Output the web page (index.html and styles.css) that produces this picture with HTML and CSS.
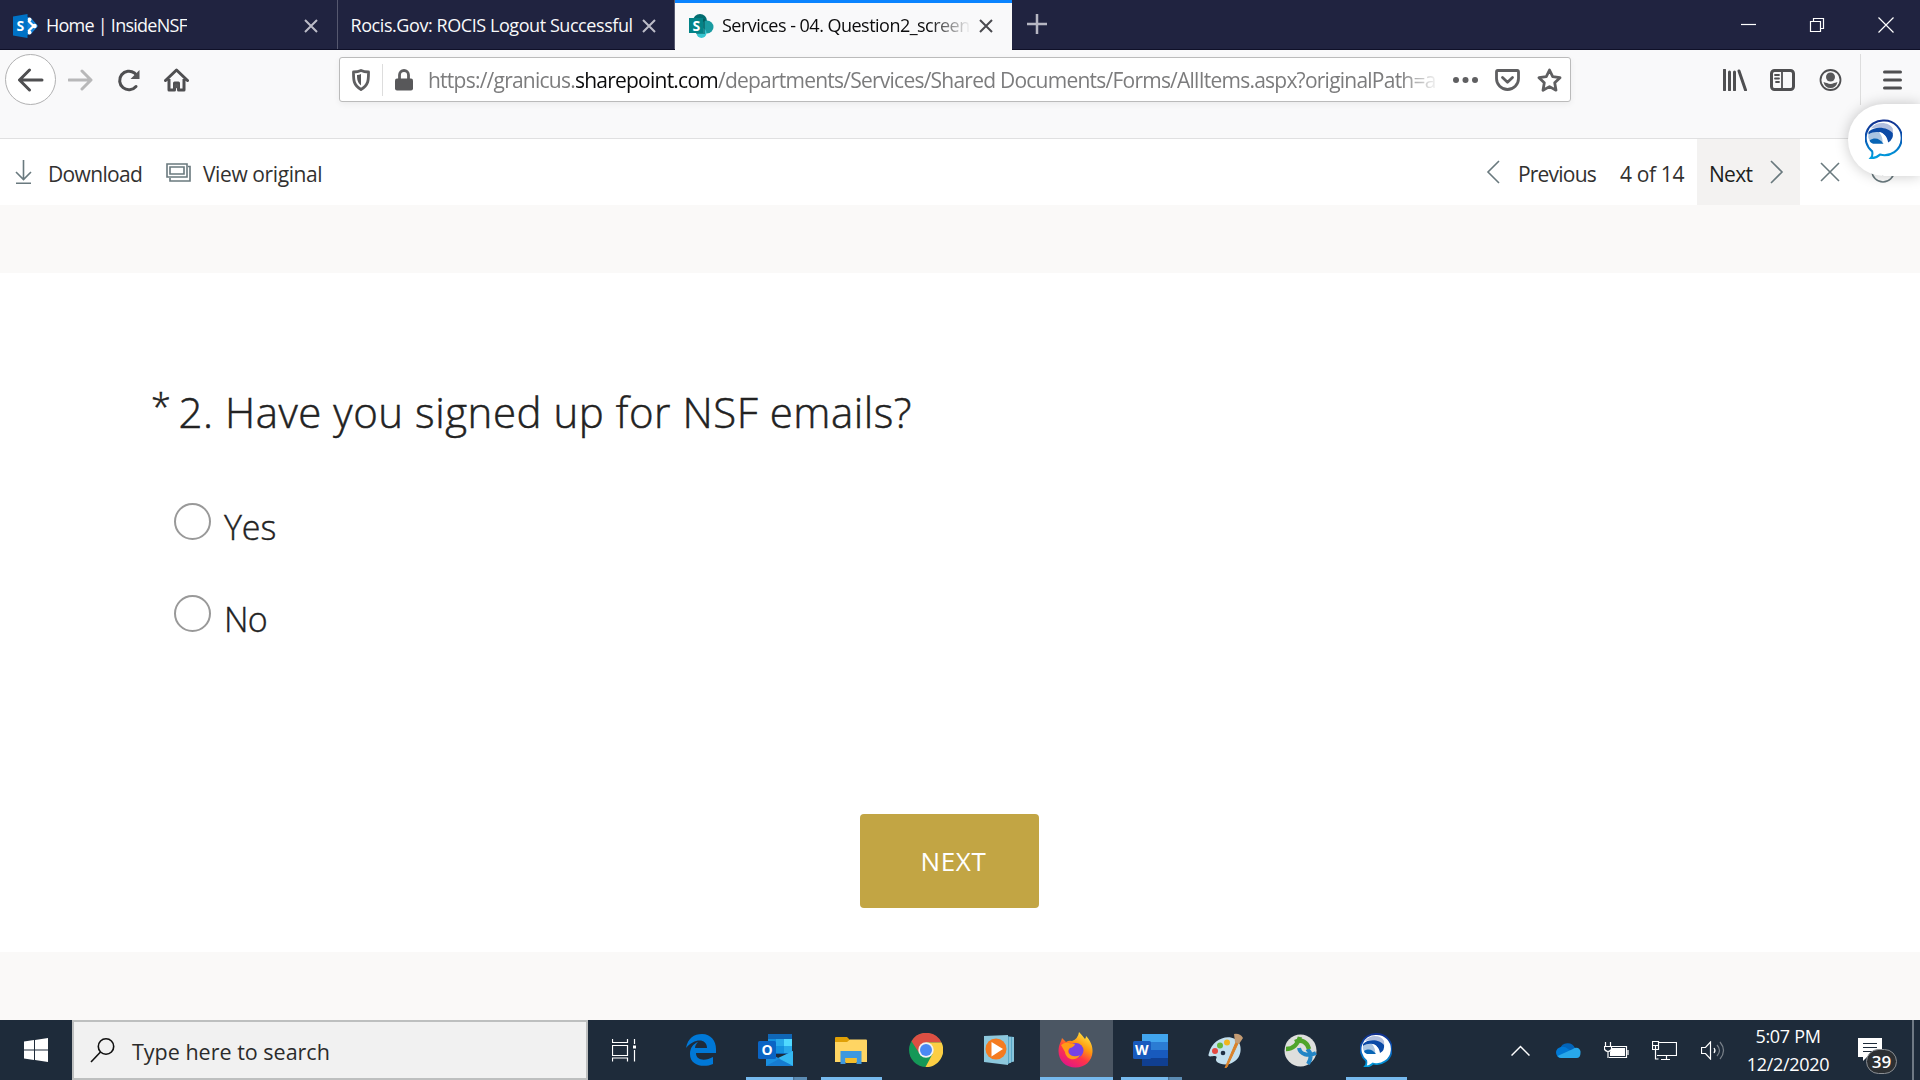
FILE: index.html
```html
<!DOCTYPE html>
<html lang="en">
<head>
  <meta charset="UTF-8">
  <meta name="viewport" content="width=device-width, initial-scale=1.0">
  <title>Services - 04. Question2_screen</title>
  <link rel="stylesheet" href="styles.css">
</head>
<body>
  <div class="tabs">
    <div class="tab">
      <svg class="favicon" width="25" height="24" viewBox="0 0 25 24">
        <path d="M14 3l4 1 7 8-7 8-4 1z" fill="#1080d8"/>
        <path d="M15 6.500l5.500 5.500-5.500 5.500" fill="none" stroke="#fff" stroke-width="2.200"/>
        <circle cx="16.500" cy="5.500" r="2" fill="#fff"/><circle cx="16.500" cy="18.500" r="2" fill="#fff"/><circle cx="21.500" cy="12" r="2.300" fill="#fff"/>
        <path d="M0 2.500L14.500 0v24L0 21.500z" fill="#0072c6"/>
        <text x="3.500" y="17" class="logo-letter">S</text>
      </svg>
      <span class="tab-title home-title">Home | InsideNSF</span>
      <svg class="tab-close" width="14" height="14" viewBox="0 0 14 14"><path d="M1 1l12 12M13 1L1 13"/></svg>
    </div>
    <div class="tab">
      <span class="tab-title rocis-title">Rocis.Gov: ROCIS Logout Successful</span>
      <svg class="tab-close" width="14" height="14" viewBox="0 0 14 14"><path d="M1 1l12 12M13 1L1 13"/></svg>
    </div>
    <div class="tab active">
      <svg class="favicon" width="25" height="24" viewBox="0 0 25 24">
        <circle cx="11" cy="7" r="7" fill="#036c70"/>
        <circle cx="18" cy="13" r="6.500" fill="#1a9ba1"/>
        <circle cx="12.500" cy="19" r="5" fill="#37c6d0"/>
        <path d="M7 5h9v15H7z" fill="#024f52" opacity=".5"/>
        <path d="M0 4h14v15H0z" fill="#038387"/>
        <text x="3.500" y="16.500" class="logo-letter">S</text>
      </svg>
      <span class="tab-title services-title">Services - 04. Question2_screen</span>
      <svg class="tab-close" width="14" height="14" viewBox="0 0 14 14"><path d="M1 1l12 12M13 1L1 13"/></svg>
    </div>
    <svg class="new-tab" width="22" height="22" viewBox="0 0 22 22"><path d="M11 1v20M1 11h20"/></svg>
    <div class="window-buttons">
      <svg width="16" height="16" viewBox="0 0 16 16"><path d="M1 7.500h15"/></svg>
      <svg width="16" height="16" viewBox="0 0 16 16"><path d="M1.500 4.500h10v10h-10zM4.500 4.500v-3h10v10h-3"/></svg>
      <svg width="16" height="16" viewBox="0 0 16 16"><path d="M.5 .5l15 15M15.500 .5l-15 15"/></svg>
    </div>
  </div>

  <div class="toolbar">
    <div class="nav">
      <div class="back">
        <svg width="26" height="24" viewBox="0 0 26 24"><path d="M24 12H2M11.500 2L1.500 12l10 10"/></svg>
      </div>
      <svg class="forward" width="25" height="24" viewBox="0 0 25 24"><path d="M1 12h21.500M14 3l9 9-9 9"/></svg>
      <svg class="reload" width="25" height="24" viewBox="0 0 25 24">
        <path d="M20 18.500A9.300 9.300 0 1 1 18.500 5l2.500 2.500"/>
        <path d="M23.500 2v9h-9z" class="solid"/>
      </svg>
      <svg class="home" width="25" height="24" viewBox="0 0 25 24">
        <path d="M1.500 12.500L12.500 2l11 10.500M5 11v11h5.500v-7h4v7H20V11"/>
        <circle cx="12.500" cy="18" r="2.200" class="solid"/>
      </svg>
    </div>
    <div class="url-bar">
      <svg class="shield" width="18" height="22" viewBox="0 0 18 22">
        <path d="M9 1.500c2.500 1.200 4.500 1.500 7.500 1.500 0 8 .2 13-7.500 17.500C1.300 16 1.500 11 1.500 3c3 0 5-.3 7.500-1.500z"/>
        <path d="M9 5v11.500C5.500 13.500 5 10.500 5 6c1.500 0 2.800-.4 4-1z" class="solid"/>
      </svg>
      <div class="url-divider"></div>
      <svg class="lock" width="18" height="22" viewBox="0 0 18 22">
        <path d="M4.500 10V6a4.500 4.500 0 0 1 9 0v4"/>
        <rect x="0" y="9.500" width="18" height="12" rx="2" class="solid"/>
      </svg>
      <span class="url">https://granicus.<b>sharepoint.com</b>/departments/Services/Shared Documents/Forms/AllItems.aspx?originalPath=a</span>
      <svg class="dots" width="25" height="6" viewBox="0 0 25 6"><circle cx="3" cy="3" r="3"/><circle cx="12.500" cy="3" r="3"/><circle cx="22" cy="3" r="3"/></svg>
      <svg class="pocket" width="25" height="22" viewBox="0 0 25 22"><path d="M2.800 1.500h19.400q1.300 0 1.300 1.500v6.500a11 11 0 0 1-22 0V3q0-1.500 1.300-1.500zM7.500 8.500l5 4.700 5-4.700"/></svg>
      <svg class="star" width="25" height="24" viewBox="0 0 25 24"><path d="M12.500 2l3.200 6.700 7.300 1-5.300 5.100 1.300 7.400-6.500-3.600L6 22.200l1.300-7.400L2 9.700l7.300-1z"/></svg>
    </div>
    <div class="tools">
      <svg class="library" width="25" height="22" viewBox="0 0 25 22"><path d="M1.500 1v20M6.500 3v18M11.500 3v18M16 2l6.500 19"/></svg>
      <svg width="25" height="22" viewBox="0 0 25 22"><rect x="1.500" y="1.500" width="22" height="19" rx="3"/><path d="M12 2v18M5 6h4M5 9.500h4M6 13h3" class="thin"/></svg>
      <svg width="23" height="22" viewBox="0 0 23 22"><circle cx="11.500" cy="11" r="10" class="thin"/><circle cx="11.500" cy="8" r="4.500" class="solid"/><path d="M4.500 13q2.500 1 3.500 1 3.500 2 7 0 1 0 3.500-1-1.500 6-7 6t-7-6z" class="solid"/></svg>
      <div class="menu-button">
        <svg width="19" height="20" viewBox="0 0 19 20"><path d="M1.500 2h16M1.500 10h16M1.500 18h16"/></svg>
      </div>
    </div>
  </div>

  <div class="doc-bar">
    <div class="doc-left">
      <svg class="download-icon" width="17" height="24" viewBox="0 0 17 24"><path d="M8.500 0v19M1 12l7.500 7.500L16 12M1 23.300h15"/></svg>
      <span class="download">Download</span>
      <svg class="original-icon" width="25" height="19" viewBox="0 0 25 19"><path d="M1 1h20v13H1zM4 4h14v7H4zM22 3.500h2V18H4v-3"/></svg>
      <span class="original">View original</span>
    </div>
    <div class="doc-right">
      <svg class="chevron" width="14" height="24" viewBox="0 0 14 24"><path d="M13 1L2 12l11 11"/></svg>
      <span class="previous">Previous</span>
      <span class="count">4 of 14</span>
      <div class="doc-next">
        <span class="next-label">Next</span>
        <svg class="chevron" width="14" height="24" viewBox="0 0 14 24"><path d="M1 1l11 11L1 23"/></svg>
      </div>
      <svg class="doc-close" width="20" height="20" viewBox="0 0 20 20"><path d="M1 1l18 18M19 1L1 19"/></svg>
      <svg class="doc-info" width="24" height="24" viewBox="0 0 24 24"><circle cx="12" cy="11" r="11"/><path d="M12 10v6"/></svg>
    </div>
  </div>

  <div class="viewer">
    <div class="page">
      <h1 class="question"><span class="required">*</span>2. Have you signed up for NSF emails?</h1>
      <div class="answers">
        <label class="answer"><i class="radio"></i><span class="yes">Yes</span></label>
        <label class="answer"><i class="radio"></i><span class="no">No</span></label>
      </div>
      <button class="next-btn">NEXT</button>
    </div>
  </div>

  <!-- Jabber tab floating at the window edge -->
  <div class="floating">
    <svg width="37" height="40" viewBox="0 0 32 34">
      <defs>
        <linearGradient id="wave" x1="0" y1="0" x2="0" y2="1"><stop offset="0" stop-color="#12308f"/><stop offset=".5" stop-color="#0758b4"/><stop offset="1" stop-color="#00a0e0"/></linearGradient>
      </defs>
      <path d="M16 1a15 15 0 1 1-3 29.500Q9 34 5 33.500q2-2 1.200-5.800A15 15 0 0 1 16 1z" fill="#fff" stroke="url(#wave)" stroke-width="1.800"/>
      <path d="M5 8C10 1 21 2 24 8q1 4-1 8C20 8 12 6 5 8z" fill="#b2bfdf"/>
      <path d="M3 11C9 5 20 7 24 12q1 5-4 8c-1-7-6-10-17-7z" fill="#0b4aa6"/>
      <path d="M3 13c6-4 14-2 15 3l1 4H6q-4-3-3-7z" fill="#a9c5e2"/>
      <path d="M12 11c4 0 8 5 7 10l-4 .5q1-6-3-10.500z" fill="#fff"/>
      <path d="M4 18c5-3 9-1 12 3H7q-3-1-3-3z" fill="#0865b5"/>
    </svg>
  </div>

  <div class="taskbar">
    <div class="start">
      <svg width="24" height="24" viewBox="0 0 24 24"><path d="M0 3.500L10 2v9.500H0zM11 1.900L24 0v11.500H11zM0 12.500h10V22L0 20.500zM11 12.500h13V24l-13-1.900z" fill="#fff"/></svg>
    </div>
    <div class="search">
      <svg width="25" height="25" viewBox="0 0 25 25"><circle cx="16" cy="8.500" r="7.700"/><path d="M10.500 14L1 24"/></svg>
      <span class="search-text">Type here to search</span>
    </div>
    <div class="apps">
      <div class="app task-view">
        <svg width="25" height="24" viewBox="0 0 25 24" class="line"><path d="M.5 1v3.500h15V1M.5 7.500h15v10H.5zM.5 23.500V20h15v3.500M22.500 1v5M22.500 12v11.500"/><path d="M21 7.500h3v3h-3z" fill="#fff" stroke="none"/></svg>
      </div>
      <div class="app">
        <svg width="30" height="32" viewBox="0 0 30 32"><path d="M0 14C2 4 8 0 16 0c9 0 14 7 14 15v4H10c0 8 10 8 17 4v7c-9 4-23 2-23-10 0-6 3-10 8-12-2 2-3 4-3 6h12C21 4 8 4 0 14z" fill="#0078d7"/></svg>
      </div>
      <div class="app open">
        <svg width="36" height="32" viewBox="0 0 36 32">
          <path d="M10 0h24v20H10z" fill="#1066b5"/><path d="M10 5h8v7h-8zM18 12h8v7h-8z" fill="#1490df"/><path d="M18 5h8v7h-8zM26 12h8v7h-8z" fill="#28a8ea"/><path d="M26 5h8v7h-8z" fill="#50d9ff"/>
          <path d="M8 17l14 8 13-8v15H8z" fill="#1a8fe0"/><path d="M35 17v15L20 24z" fill="#35b8f1"/><path d="M8 32l13-7 14 7z" fill="#167bd1"/>
          <rect y="7" width="18" height="18" rx="1.500" fill="#0a64c4"/><text x="3.500" y="21" class="app-letter">O</text>
        </svg>
        <i class="underline stacked"></i>
      </div>
      <div class="app open">
        <svg width="32" height="27" viewBox="0 0 32 27"><path d="M0 1q0-1 1-1h11l3 3v8H0z" fill="#e0a006"/><path d="M0 5h12l3-2.500h16q1 0 1 1V25H0z" fill="#ffd563"/><path d="M5.500 27V14h21v13h-5v-6h-11v6z" fill="#3d98df"/><path d="M10.500 21h11v5h-11z" fill="#f4bd2a"/></svg>
        <i class="underline"></i>
      </div>
      <div class="app">
        <svg width="34" height="34" viewBox="0 0 34 34"><circle cx="17" cy="17" r="17" fill="#159857"/><path d="M2.500 8.200A17 17 0 0 1 32.500 9.500H17l-6.500 11z" fill="#dd4f43"/><path d="M17 9.500h15.500A17 17 0 0 1 16.500 34l7-13z" fill="#fcce44"/><circle cx="17" cy="17" r="7.700" fill="#f1f1f1"/><circle cx="17" cy="17" r="6" fill="#4a89f3"/></svg>
      </div>
      <div class="app media">
        <svg width="31" height="30" viewBox="0 0 31 30"><path d="M22 1l8 1v24l-6 3z" fill="#5aa8c8"/><path d="M26 2v26M29 2v25" stroke="#b7e1ef"/><path d="M0 1l24-1v30L0 27z" fill="#8dc8dd"/><circle cx="12" cy="14" r="10.500" fill="#f47b20"/><path d="M7.500 7l11.500 7-11.500 7.500z" fill="#fff"/></svg>
      </div>
      <div class="app current">
        <svg width="35" height="36" viewBox="0 0 35 36">
          <defs><linearGradient id="fox" x1=".9" y1="0" x2=".3" y2="1"><stop offset="0" stop-color="#fff44f"/><stop offset=".4" stop-color="#ff980e"/><stop offset=".65" stop-color="#ff3647"/><stop offset="1" stop-color="#e31587"/></linearGradient></defs>
          <path d="M4 6l4 4q3-2 6-1Q20 7 21 0q3 3 6 7 1-1 1-3c4 4 7 10 6.500 16C34 29 27 35.500 17.500 35.500S.5 29 .5 19C.5 13 3 10 4 6z" fill="url(#fox)"/>
          <circle cx="18" cy="18.500" r="7.500" fill="#7542e5"/>
          <path d="M3 13q5-4 10-1h4q-1 3-5 4c-3 2-2 7 3 8q4 1 7-1c-4 7-14 5-15-3z" fill="#ff9a16"/>
        </svg>
        <i class="underline"></i>
      </div>
      <div class="app open">
        <svg width="36" height="32" viewBox="0 0 36 32"><path d="M9 0h26v8H9z" fill="#41a5ee"/><path d="M9 8h26v8H9z" fill="#2b7cd3"/><path d="M9 16h26v8H9z" fill="#185abd"/><path d="M9 24h26v8H9z" fill="#103f91"/><rect y="7" width="18" height="18" rx="1.500" fill="#185abd"/><text x="2" y="21" class="app-letter">W</text></svg>
        <i class="underline stacked"></i>
      </div>
      <div class="app">
        <svg width="36" height="35" viewBox="0 0 36 35"><path d="M1 20C4 8 17 1 27 6c8 4 7 17 0 22-6 5-14 4-18 1-3-3 2-5-2-6-4 0-8 2-6-3z" fill="#c3e0ef"/><circle cx="7" cy="18" r="3" fill="#e34a42"/><circle cx="12" cy="12.500" r="3" fill="#67b83d"/><circle cx="19" cy="9.500" r="3" fill="#f2b51d"/><circle cx="15" cy="20" r="2.300" fill="#203044"/><path d="M28 9l2 1.500L19 34l-2 1z" fill="#d9822a" stroke="#d9822a"/><path d="M26 1q6-1 9 4l-4 6-4-2z" fill="#c39b73"/></svg>
      </div>
      <div class="app">
        <svg width="33" height="33" viewBox="0 0 33 33">
          <circle cx="16.500" cy="16.500" r="16" fill="#dedfdd"/>
          <path d="M23 15c5 4 4 10 1 15M15 14c1 6 9 9 17 5" fill="none" stroke="#2385c5" stroke-width="4"/>
          <path d="M2 15C9 15 14 10 16 3M11 8c7-3 12 0 14 7" fill="none" stroke="#4fa52a" stroke-width="4.500"/>
        </svg>
      </div>
      <div class="app open">
        <svg width="32" height="34" viewBox="0 0 32 34">
          <path d="M16 1a15 15 0 1 1-3 29.500Q9 34 5 33.500q2-2 1.200-5.800A15 15 0 0 1 16 1z" fill="#fff" stroke="url(#wave)" stroke-width="1.800"/>
          <path d="M5 8C10 1 21 2 24 8q1 4-1 8C20 8 12 6 5 8z" fill="#b2bfdf"/>
          <path d="M3 11C9 5 20 7 24 12q1 5-4 8c-1-7-6-10-17-7z" fill="#0b4aa6"/>
          <path d="M3 13c6-4 14-2 15 3l1 4H6q-4-3-3-7z" fill="#a9c5e2"/>
          <path d="M12 11c4 0 8 5 7 10l-4 .5q1-6-3-10.500z" fill="#fff"/>
          <path d="M4 18c5-3 9-1 12 3H7q-3-1-3-3z" fill="#0865b5"/>
        </svg>
        <i class="underline"></i>
      </div>
    </div>
    <div class="tray">
      <svg class="line" width="19" height="11" viewBox="0 0 19 11"><path d="M.5 10.500l9-9 9 9" stroke-width="1.500"/></svg>
      <svg class="onedrive" width="25" height="16" viewBox="0 0 25 16"><path d="M4 7A8 8 0 0 1 19 6l-6 6z" fill="#0364b8"/><path d="M5 5q4-1 7 2l5 3-12 6q-5-.5-5-6 .5-4 5-5z" fill="#0078d4"/><path d="M17 7q2-2 5-1 3 2 2.500 5 0 5-4 5H5q-2 0-3.500-2z" fill="#28a8ea"/></svg>
      <svg class="line battery" width="25" height="17" viewBox="0 0 25 17"><path d="M8 4.500h14.500v11H5M24 8v5M1.500 0v4M6.500 0v4M.5 4.500h7v3q-3.500 4-7 0zM4 9v7"/><path d="M8 6h13v8H6v-4z" fill="#fff" stroke="none"/></svg>
      <svg class="line network" width="25" height="19" viewBox="0 0 25 19"><path d="M7 1.500h17.500v13H5M14.500 15v3M9 18.500h9M.5 .5h6v8h-6zM1 4.500h5M3.500 4v14h3"/></svg>
      <svg class="line speaker" width="24" height="19" viewBox="0 0 24 19"><path d="M.5 6.500h4l5-5.500v17l-5-5.500h-4z"/><path d="M13 7q2 2.500 0 5"/><path d="M16 4q5 5.500 0 11M19 1q7 8.500 0 17" opacity=".4"/></svg>
      <div class="clock"><span class="time">5:07 PM</span><span class="date">12/2/2020</span></div>
      <div class="notice">
        <svg width="24" height="24" viewBox="0 0 24 24"><path d="M0 0h24v19H9l-4 4v-4H0z" fill="#fff"/><path d="M5 5.500h14M5 9.500h14M5 13.500h14" stroke="#1e2b3a"/></svg>
        <span class="badge">39</span>
      </div>
      <div class="show-desktop"></div>
    </div>
  </div>
</body>
</html>
```
FILE: styles.css
```css
* {
  box-sizing: border-box;
}
body {
  margin: 0;
  width: 1920px;
  height: 1080px;
  overflow: hidden;
  display: flex;
  flex-direction: column;
  font-family: "Open Sans", "Noto Sans", sans-serif;
  background: #faf9f8;
  color: #323130;
}
svg {
  display: block;
  flex-shrink: 0;
  fill: none;
}
span {
  white-space: nowrap;
}

/* tabs */
.tabs {
  height: 50px;
  background: #202340;
  border-bottom: 1px solid #0f1028;
  display: flex;
  align-items: center;
  flex-shrink: 0;
}
.tab {
  width: 337.500px;
  height: 49px;
  padding: 2px 19px 0 13px;
  border-right: 1px solid #56586f;
  display: flex;
  align-items: center;
  color: #f9f9fa;
  font-size: 18px;
}
.tab.active {
  width: 337px;
  height: 50px;
  margin-bottom: -1px;
  padding: 0 19px 1px 14px;
  border-top: 3px solid #0a84ff;
  border-right: 0;
  background: #f9f9fa;
  color: #0c0c0d;
}
.tab-title {
  overflow: hidden;
  margin-top: -2px;
}
.favicon {
  margin-right: 8px;
}
.tab-close {
  margin-left: auto;
  stroke: #bcbcc8;
  stroke-width: 2;
}
.active .tab-close {
  stroke: #4a4a4f;
}
.home-title {
  letter-spacing: -0.750px;
}
.rocis-title {
  letter-spacing: -0.430px;
}
.services-title {
  width: 249px;
  letter-spacing: -0.520px;
  -webkit-mask-image: linear-gradient(to right, #000 83%, transparent);
  mask-image: linear-gradient(to right, #000 83%, transparent);
}
.tab:nth-child(2) {
  padding-right: 18px;
  padding-left: 13px;
}
.logo-letter {
  font: bold 14px "Open Sans", sans-serif;
  fill: #fff;
}
.new-tab {
  margin-left: 14px;
  margin-bottom: 1px;
  stroke: #b6b6c2;
  stroke-width: 2.500;
}
.window-buttons {
  display: flex;
  gap: 53px;
  margin-left: auto;
  margin-right: 26px;
  stroke: #fff;
  stroke-width: 1.200;
}

/* navigation toolbar */
.toolbar {
  height: 89px;
  background: #f9f9fa;
  border-bottom: 1px solid #e0e0e1;
  display: flex;
  flex-shrink: 0;
  padding: 4px 0 0 5px;
  stroke: #4f4f51;
}
.nav {
  display: flex;
  align-items: center;
  height: 51px;
  width: 334px;
  stroke-width: 3;
  stroke-linecap: round;
  stroke-linejoin: round;
}
.solid {
  fill: #58585a;
  stroke: none;
}
.back {
  width: 51px;
  height: 51px;
  border: 1px solid #b1b1b2;
  border-radius: 50%;
  background: #fff;
  display: flex;
  align-items: center;
  justify-content: center;
}
.forward {
  margin-left: 12px;
  stroke: #b8b8b9;
}
.reload {
  margin-left: 23px;
}
.home {
  margin-left: 23px;
}
.url-bar {
  width: 1232px;
  height: 45px;
  margin-top: 3px;
  padding-left: 12px;
  border: 1px solid #bbb;
  border-radius: 3px;
  background: #fff;
  box-shadow: 0 2px 6px rgba(0, 0, 0, .06);
  display: flex;
  align-items: center;
  stroke: #5f5f61;
  stroke-width: 2.800;
  stroke-linejoin: round;
  stroke-linecap: round;
}
.url-divider {
  width: 1px;
  height: 32px;
  margin: 0 12px;
  background: #ddd;
}
.url {
  width: 1012px;
  margin-left: 15px;
  overflow: hidden;
  font-size: 21px;
  letter-spacing: -0.765px;
  color: #7c7c7d;
  -webkit-mask-image: linear-gradient(to right, #000 96%, transparent);
  mask-image: linear-gradient(to right, #000 96%, transparent);
}
.url b {
  font-weight: 400;
  color: #0c0c0d;
}
.dots {
  margin-left: 13px;
  fill: #5f5f61;
  stroke: none;
}
.pocket {
  margin-left: 17px;
}
.star {
  margin-left: 17px;
}
.tools {
  display: flex;
  align-items: center;
  height: 51px;
  gap: 24px;
  margin-left: auto;
  stroke-width: 3;
  stroke-linecap: round;
}
.library {
  margin-right: -2px;
}
.thin {
  stroke-width: 1.800;
}
.menu-button {
  height: 51px;
  width: 60px;
  margin-left: -6px;
  padding-left: 22px;
  border-left: 1px solid #ddd;
  display: flex;
  align-items: center;
}

/* document command bar */
.doc-bar {
  height: 66px;
  background: #fff;
  display: flex;
  justify-content: space-between;
  flex-shrink: 0;
  font-size: 21px;
  stroke: #69797e;
  stroke-width: 1.600;
}
.doc-left,
.doc-right {
  display: flex;
  align-items: center;
}
.doc-left span,
.doc-right span {
  padding-top: 3px;
}
.doc-left {
  padding-left: 15px;
}
.download {
  width: 95px;
  margin: 0 23px 0 16px;
  letter-spacing: -0.650px;
}
.original {
  margin-left: 12px;
  letter-spacing: -0.4px;
}
.previous {
  width: 79px;
  margin: 0 23px 0 18px;
  letter-spacing: -0.8px;
}
.count {
  width: 77px;
  letter-spacing: -0.350px;
}
.doc-next {
  display: flex;
  align-items: center;
  align-self: stretch;
  width: 103px;
  padding-left: 12px;
  background: #f3f2f1;
  color: #201f1e;
}
.next-label {
  width: 61px;
  letter-spacing: -0.7px;
}
.doc-close {
  margin-left: 20px;
}
.doc-info {
  margin: 0 25px 0 31px;
}

/* survey page */
.viewer {
  height: 815px;
  padding: 68px 0;
  background: #faf9f8;
}
.page {
  height: 679px;
  padding: 109px 0 0 151px;
  background: #fff;
}
.question {
  margin: 0;
  font-size: 42px;
  font-weight: 300;
  line-height: 60px;
  letter-spacing: 0.530px;
  color: #222;
  -webkit-text-stroke: 0.5px #222;
}
.required {
  display: inline-block;
  width: 27.500px;
  height: 60px;
  line-height: 50px;
  font-size: 36px;
  vertical-align: top;
}
.answers {
  margin: 61px 0 0 23px;
}
.answer {
  display: flex;
  height: 92px;
  font-size: 34px;
  font-weight: 300;
  line-height: 48px;
  color: #222;
  -webkit-text-stroke: 0.4px #222;
}
.answer span {
  margin-left: 13px;
}
.radio {
  width: 37px;
  height: 37px;
  border: 2px solid #999;
  border-radius: 50%;
}
.yes {
  letter-spacing: -0.1px;
}
.no {
  letter-spacing: -0.7px;
}
.next-btn {
  display: block;
  width: 179px;
  height: 94px;
  margin: 127px 0 0 709px;
  padding: 0 0 0 8px;
  border: 0;
  border-radius: 4px;
  background: #c2a544;
  color: #fff;
  font: 400 26px "Open Sans", sans-serif;
  letter-spacing: 0.7px;
}

/* floating chat tab */
.floating {
  position: absolute;
  top: 104px;
  right: 0;
  width: 72px;
  height: 72px;
  padding: 15px 0 0 17px;
  border-radius: 36px 0 0 36px;
  background: #fff;
  box-shadow: 0 0 14px rgba(0, 0, 0, .22);
}

/* taskbar */
.taskbar {
  height: 60px;
  display: flex;
  flex-shrink: 0;
  background: #1e2b3a;
  color: #fff;
}
.start {
  width: 72px;
  display: flex;
  align-items: center;
  justify-content: center;
}
.search {
  width: 516px;
  padding-left: 16px;
  border: 2px solid #bdbfbf;
  background: #f1f1f1;
  color: #2b2b2b;
  display: flex;
  align-items: center;
  stroke: #111;
  stroke-width: 1.600;
}
.search-text {
  margin: 2px 0 0 17px;
  font-size: 21.500px;
}
.apps {
  display: flex;
}
.app {
  position: relative;
  width: 75px;
  padding-right: 2px;
  display: flex;
  align-items: center;
  justify-content: center;
}
.task-view {
  width: 76px;
  padding-right: 3px;
}
.media {
  padding-right: 5px;
}
.current {
  width: 73px;
  margin: 0 1px;
  background: #4b5663;
}
.underline {
  position: absolute;
  left: 7px;
  bottom: 0;
  width: 61px;
  height: 3px;
  background: #76b9ed;
}
.stacked {
  background: linear-gradient(to right, #76b9ed 47px, #46698a 47px, #5b8bb3 49px);
}
.current .underline {
  left: 0;
  width: 73px;
}
.line {
  stroke: #fff;
  stroke-width: 1.200;
}
.app-letter {
  font: bold 14px "Open Sans", sans-serif;
  fill: #fff;
}
.tray {
  display: flex;
  align-items: center;
  margin-left: auto;
}
.onedrive {
  margin-left: 26px;
}
.battery {
  margin-left: 23px;
}
.network {
  margin-left: 23px;
}
.speaker {
  margin-left: 24px;
}
.clock {
  width: 84px;
  margin-left: 21px;
  display: flex;
  flex-direction: column;
  align-items: center;
  font-size: 18px;
  line-height: 28px;
}
.time,
.date {
  letter-spacing: -0.3px;
}
.notice {
  position: relative;
  margin-left: 28px;
}
.badge {
  position: absolute;
  left: 8px;
  top: 11px;
  width: 31px;
  height: 25px;
  border: 1px solid #8b8f94;
  border-radius: 13px;
  background: #2d3033;
  font-size: 17px;
  font-weight: 600;
  line-height: 23px;
  text-align: center;
}
.show-desktop {
  width: 8px;
  height: 60px;
  margin-left: 30px;
  border-left: 2px solid #6f7984;
}
```
